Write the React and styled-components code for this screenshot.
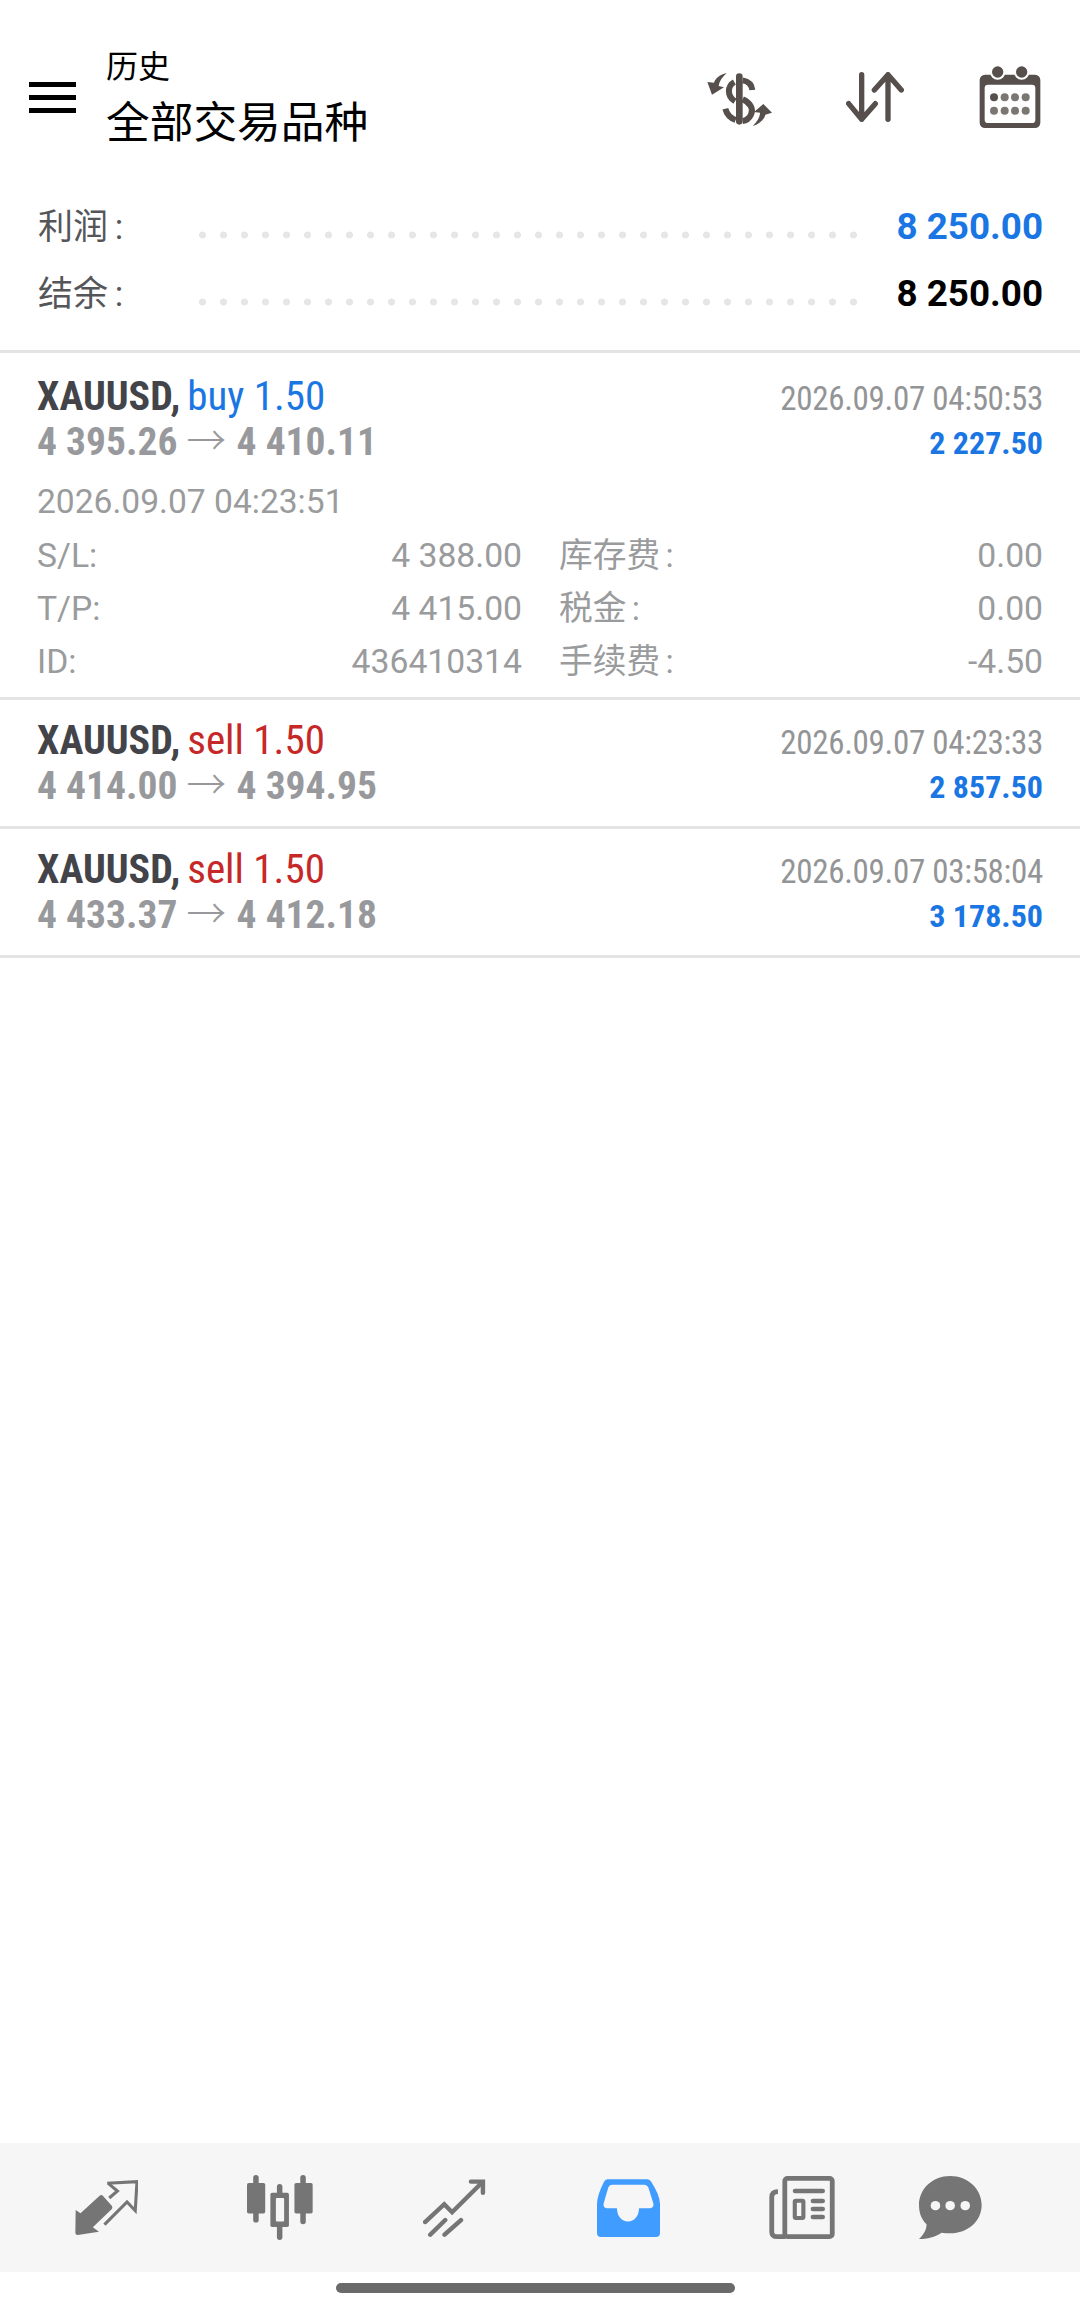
import { Fragment } from 'react'
import styled, { createGlobalStyle } from 'styled-components'

const GlobalStyle = createGlobalStyle`
  html, body { margin: 0; padding: 0; background: #fff; }
  body { font-family: Roboto, "Noto Sans CJK SC", sans-serif; }
`

//STYLES
const Page = styled.div`
  width: 1080px;
  height: 2314px;
  display: flex;
  flex-direction: column;
  overflow: hidden;
  background: #fff;
`
const Header = styled.header`
  height: 190px;
  flex: none;
  display: flex;
  align-items: flex-start;
  padding: 50px 30px 0 29px;
  box-sizing: border-box;
`
const MenuButton = styled.div`
  width: 47px;
  margin-top: 32px;
  display: flex;
  flex-direction: column;
  gap: 8px;
  span { display: block; height: 5px; background: #000; }
`
const Titles = styled.div`
  margin-left: 30px;
  flex: 1;
  color: #000;
`
const Subtitle = styled.div`
  font-size: 32px;
  line-height: 34px;
`
const Title = styled.div`
  margin-top: 8px;
  font-size: 43.7px;
  line-height: 62px;
`
const HeaderIcons = styled.div`
  display: flex;
  align-items: center;
  gap: 55px;
  margin-top: 12px;
`
const IconCell = styled.div`
  width: 80px;
  height: 70px;
  display: flex;
  justify-content: center;
  align-items: center;
`
const Summary = styled.section`
  padding: 3px 37px 23px 38px;
  border-bottom: 3px solid #e4e4e4;
`
const SummaryRow = styled.div`
  display: grid;
  grid-template-columns: 154px 672px 1fr;
  height: 67px;
  align-items: center;
`
const SummaryLabel = styled.span`
  margin-bottom: 6px;
  font-size: 35px;
  word-spacing: -2px;
  color: #55565a;
`
const Leader = styled.span`
  height: 8px;
  margin-top: 16px;
  background-image: radial-gradient(circle, #e6e6e6 3.2px, transparent 3.8px);
  background-size: 21px 8px;
  background-repeat: repeat-x;
`
const SummaryValue = styled.span`
  font-size: 36.8px;
  font-weight: 700;
  text-align: right;
  white-space: nowrap;
  color: ${(p) => (p.$blue ? '#1a76e3' : '#000')};
`
const Deal = styled.article`
  padding: ${(p) => (p.$open ? '21px 37px 10px' : '18px 37px 18px')};
  border-bottom: 3px solid #e4e4e4;
`
const DealTop = styled.div`
  display: flex;
  justify-content: space-between;
`
const DealRight = styled.div`
  padding-top: 2px;
  margin-bottom: -2px;
`
const DealLine = styled.div`
  height: 45px;
  line-height: 45px;
  white-space: nowrap;
  font-family: "Roboto Condensed", Roboto, sans-serif;
  font-stretch: 75%;
  text-align: ${(p) => (p.$right ? 'right' : 'left')};
`
const Symbol = styled.span`
  display: inline-block;
  font-size: 40px;
  font-weight: 700;
  color: #434449;
`
const Side = styled.span`
  display: inline-block;
  margin-left: 7px;
  font-size: 41px;
  color: ${(p) => (p.$sell ? '#c62828' : '#1a76e3')};
`
const Prices = styled.span`
  display: inline-block;
  font-size: 39.5px;
  font-weight: 700;
  color: #98999c;
`
const PriceArrow = styled.span`
  margin-right: 1.5px;
  font-weight: 300;
  line-height: 0;
  font-family: "Noto Sans CJK SC", sans-serif;
`
const CloseTime = styled.span`
  font-size: 33px;
  letter-spacing: -0.3px;
  color: #939496;
`
const Profit = styled.span`
  font-size: 32px;
  font-weight: 700;
  color: #1a76e3;
`
const OpenTime = styled.div`
  margin-top: 11px;
  font-size: 33.6px;
  line-height: 53px;
  color: #9a9b9d;
`
const DetailGrid = styled.div`
  display: grid;
  grid-template-columns: 485px 37px 1fr;
  grid-auto-rows: 53px;
  font-size: 33.7px;
  line-height: 53px;
  color: #9a9b9d;
`
const DetailPair = styled.div`
  display: flex;
  justify-content: space-between;
  align-items: baseline;
  height: 53px;
  padding-top: 1px;
  word-spacing: -3px;
  grid-column: ${(p) => p.$col};
`
const DetailValue = styled.span`
  word-spacing: 0;
`
const NavBar = styled.nav`
  margin-top: auto;
  height: 129px;
  flex: none;
  display: flex;
  align-items: center;
  padding-left: 19px;
  background: #f6f6f7;
`
const NavItem = styled.div`
  width: ${(p) => p.$w || 174}px;
  flex: none;
  display: flex;
  justify-content: center;
  align-items: center;
`
const HomeBar = styled.div`
  height: 42px;
  flex: none;
  display: flex;
  justify-content: center;
  padding-top: 11px;
  box-sizing: border-box;
  span { width: 399px; height: 10px; margin-right: 9px; border-radius: 5px; background: #6a6a6a; }
`

//ICONS
const BROWN = '#564f4b'
const GREY = '#757575'
const BG = '#f6f6f7'

const DollarIcon = () => (
  <svg width="80" height="70" viewBox="0 0 240 210" fill="none" stroke={BROWN} strokeWidth="18">
    <path d="M118 44V178" strokeWidth="20" strokeLinecap="round" />
    <path d="M128 55C145 58 155 68 157 84" />
    <path d="M103 60C82 72 80 102 105 118" />
    <path d="M128 112C150 122 162 140 153 158C147 170 137 176 128 177" />
    <path d="M76 140C80 156 92 168 107 174" />
    <path d="M80 33C60 38 46 48 42 62L22 60L36 98L72 76L56 72C58 58 66 46 80 33Z" fill={BROWN} stroke="none" />
    <path d="M158 192C178 186 192 174 196 158L216 152L190 126L162 150L180 152C180 166 170 180 158 192Z" fill={BROWN} stroke="none" />
  </svg>
)
const SwapIcon = () => (
  <svg width="58" height="50" viewBox="0 0 174 150" fill="none" stroke={BROWN} strokeWidth="16" strokeLinecap="round" strokeLinejoin="round">
    <path d="M47 8V142M8 95L47 142L88 95" />
    <path d="M126 142V8M85 54L126 8L166 54" />
  </svg>
)
const CalendarIcon = () => (
  <svg width="62" height="62" viewBox="0 0 182 186">
    <rect x="0" y="26" width="182" height="160" rx="16" fill={BROWN} />
    <rect x="15" y="56" width="152" height="115" rx="10" fill="#fff" />
    <circle cx="54" cy="18" r="23" fill="#fff" />
    <circle cx="126" cy="18" r="23" fill="#fff" />
    <circle cx="54" cy="18" r="17" fill={BROWN} />
    <circle cx="126" cy="18" r="17" fill={BROWN} />
    {[43, 75, 106, 138].map((x, i) => (
      <g key={x}>
        <circle cx={x} cy="94" r="12" fill={i === 0 ? BROWN : '#7b7672'} />
        <circle cx={x} cy="134" r="12" fill="#7b7672" />
      </g>
    ))}
  </svg>
)
const TradeIcon = () => (
  <svg width="63" height="55" viewBox="220 150 184 165" preserveAspectRatio="none" fill="none" stroke={GREY} strokeWidth="9">
    <path d="M222 240L236 250L292 197Q297 193 302 198L328 228Q331 233 327 238L272 292L290 305L228 315Q221 315 221 308Z" fill={GREY} stroke="none" />
    <path d="M314 160L401 155L396 242L372 216L306 284" />
    <path d="M320 204L344 183L318 161" />
  </svg>
)
const CandlesIcon = () => (
  <svg width="66" height="65" viewBox="718 133 192 194" preserveAspectRatio="none" stroke={GREY} strokeWidth="16" strokeLinecap="round">
    <path d="M744 141V267M813 168V319M881 141V272" />
    <rect x="718" y="157" width="53" height="91" rx="5" fill={GREY} stroke="none" />
    <rect x="856" y="157" width="53" height="91" rx="5" fill={GREY} stroke="none" />
    <rect x="786" y="186" width="54" height="102" rx="5" fill={GREY} stroke="none" />
    <rect x="802" y="202" width="24" height="70" rx="3" fill={BG} stroke="none" />
  </svg>
)
const ChartIcon = () => (
  <svg width="63" height="58" viewBox="1225 140 184 175" preserveAspectRatio="none" fill="none" stroke={GREY} strokeWidth="13" strokeLinecap="round">
    <path d="M1231 270L1287 216L1310 240L1396 152" />
    <path d="M1365 148H1400V182" />
    <path d="M1246 308L1290 264M1288 308L1336 264" />
  </svg>
)
const InboxIcon = () => (
  <svg width="63" height="58" viewBox="162 140 183 175" preserveAspectRatio="none">
    <path
      fillRule="evenodd"
      fill="#409cff"
      d="M192 141H308Q316 141 320 149Q345 190 345 215V303Q345 315 333 315H174Q162 315 162 303V215Q162 190 182 149Q186 141 192 141ZM205 157Q198 157 195 165L181 215Q180 228 190 228H220C220 252 234 268 252 268C270 268 284 252 284 228H316Q327 228 326 215L311 165Q307 157 300 157Z"
    />
  </svg>
)
const NewsIcon = () => (
  <svg width="66" height="63" viewBox="664 133 192 189" preserveAspectRatio="none" fill="none" stroke={GREY}>
    <rect x="710" y="140" width="138" height="175" rx="8" strokeWidth="14" />
    <path d="M690 180Q672 180 672 197V300Q672 315 688 315H712" strokeWidth="14" />
    <path d="M740 178H820" strokeWidth="14" strokeLinecap="round" />
    <rect x="739" y="207" width="25" height="52" rx="3" strokeWidth="12" />
    <path d="M792 208H820M792 232H820M792 256H820" strokeWidth="14" strokeLinecap="round" />
  </svg>
)
const ChatIcon = () => (
  <svg width="63" height="63" viewBox="1102 133 184 189" preserveAspectRatio="none">
    <path
      fill={GREY}
      d="M1193 133C1245 133 1285 172 1285 220C1285 268 1245 305 1193 305C1185 305 1176 304 1168 303C1150 316 1125 322 1102 322C1115 310 1124 296 1124 278C1108 262 1102 242 1102 220C1102 172 1141 133 1193 133Z"
    />
    <circle cx="1150" cy="222" r="14" fill={BG} />
    <circle cx="1193" cy="222" r="14" fill={BG} />
    <circle cx="1237" cy="222" r="14" fill={BG} />
  </svg>
)

//DATA
const deals = [
  { side: 'buy 1.50', open: '4 395.26', close: '4 410.11', time: '2026.09.07 04:50:53', profit: '2 227.50', expanded: true },
  { side: 'sell 1.50', open: '4 414.00', close: '4 394.95', time: '2026.09.07 04:23:33', profit: '2 857.50', sell: true },
  { side: 'sell 1.50', open: '4 433.37', close: '4 412.18', time: '2026.09.07 03:58:04', profit: '3 178.50', sell: true },
]

const details = [
  ['S/L:', '4 388.00', '库存费 :', '0.00'],
  ['T/P:', '4 415.00', '税金 :', '0.00'],
  ['ID:', '436410314', '手续费 :', '-4.50'],
]

const navIcons = [TradeIcon, CandlesIcon, ChartIcon, InboxIcon, NewsIcon]

//LOGIC
const App = () => (
  <Page>
    <GlobalStyle />
    <Header>
      <MenuButton><span /><span /><span /></MenuButton>
      <Titles>
        <Subtitle>历史</Subtitle>
        <Title>全部交易品种</Title>
      </Titles>
      <HeaderIcons>
        <IconCell><DollarIcon /></IconCell>
        <IconCell><SwapIcon /></IconCell>
        <IconCell><CalendarIcon /></IconCell>
      </HeaderIcons>
    </Header>

    <Summary>
      <SummaryRow>
        <SummaryLabel>利润 :</SummaryLabel>
        <Leader />
        <SummaryValue $blue>8 250.00</SummaryValue>
      </SummaryRow>
      <SummaryRow>
        <SummaryLabel>结余 :</SummaryLabel>
        <Leader />
        <SummaryValue>8 250.00</SummaryValue>
      </SummaryRow>
    </Summary>

    {deals.map((deal) => (
      <Deal key={deal.time} $open={deal.expanded}>
        <DealTop>
          <div>
            <DealLine>
              <Symbol>XAUUSD,</Symbol>
              <Side $sell={deal.sell}>{deal.side}</Side>
            </DealLine>
            <DealLine>
              <Prices>{deal.open} <PriceArrow>→</PriceArrow> {deal.close}</Prices>
            </DealLine>
          </div>
          <DealRight>
            <DealLine $right><CloseTime>{deal.time}</CloseTime></DealLine>
            <DealLine $right><Profit>{deal.profit}</Profit></DealLine>
          </DealRight>
        </DealTop>
        {deal.expanded && (
          <>
            <OpenTime>2026.09.07 04:23:51</OpenTime>
            <DetailGrid>
              {details.map(([a, b, c, d]) => (
                <Fragment key={a}>
                  <DetailPair $col="1"><span>{a}</span><DetailValue>{b}</DetailValue></DetailPair>
                  <DetailPair $col="3"><span>{c}</span><DetailValue>{d}</DetailValue></DetailPair>
                </Fragment>
              ))}
            </DetailGrid>
          </>
        )}
      </Deal>
    ))}

    <NavBar>
      {navIcons.map((Icon, i) => (
        <NavItem key={i}><Icon /></NavItem>
      ))}
      <NavItem $w={122}><ChatIcon /></NavItem>
    </NavBar>
    <HomeBar><span /></HomeBar>
  </Page>
)

export default App
